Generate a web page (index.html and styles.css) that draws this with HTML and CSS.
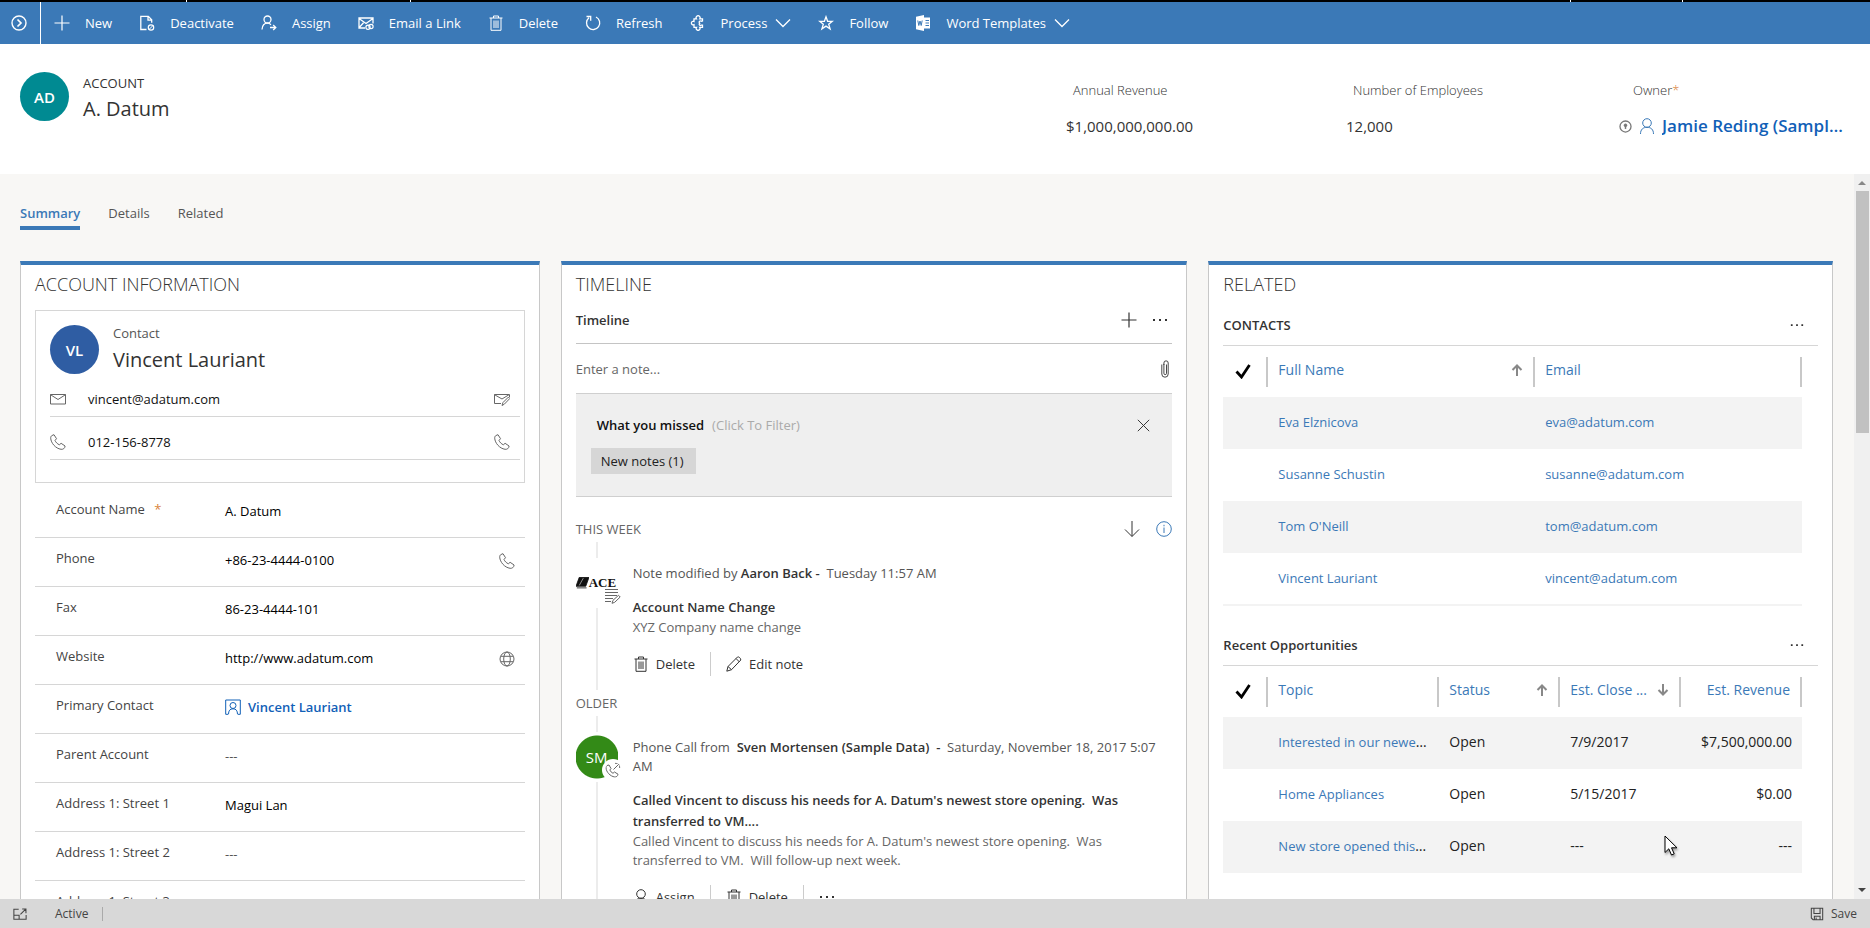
FILE: index.html
```html
<!DOCTYPE html>
<html lang="en">
<head>
<meta charset="utf-8">
<title>Account: A. Datum</title>
<link rel="stylesheet" href="styles.css">
</head>
<body>
<svg class="defs" aria-hidden="true">
  <symbol id="i-open" viewBox="0 0 16 16"><circle cx="8" cy="8" r="7" stroke-width="1.400"/><path d="M6.500 4.500 10 8l-3.500 3.500" stroke-width="1.700"/></symbol>
  <symbol id="i-plus" viewBox="0 0 16 16"><path d="M8 .5v15M.5 8h15" stroke-width="1.200"/></symbol>
  <symbol id="i-deact" viewBox="0 0 16 16"><path d="M7.500 14.500H1.800V1.300h7.500l3.400 3.500v3M9 1.300v3.900h3.700" stroke-width="1.300"/><circle cx="12" cy="12.500" r="2.700" stroke-width="1.200"/><path d="m10 14.500 4-4"/></symbol>
  <symbol id="i-assign" viewBox="0 0 16 16"><circle cx="6.500" cy="4.500" r="3.500" stroke-width="1.300"/><path d="M1 14.500c.3-4 2-6.300 5.500-6.300 1.500 0 2.700.6 3.400 1.600M9 12.500h5.500M12.200 10l2.600 2.500-2.600 2.500" stroke-width="1.300"/></symbol>
  <symbol id="i-link" viewBox="0 0 16 16"><path d="M7 13H1V3h14v5.500M1 3.500 8 8.500l7-5M1 12.700l4.500-5" stroke-width="1.300"/><circle cx="10" cy="12.300" r="2.100" stroke-width="1.200"/><circle cx="13" cy="11.500" r="2.100" stroke-width="1.200"/></symbol>
  <symbol id="i-trash" viewBox="0 0 16 16"><path d="M1.500 3h13M5.500 3V1h5v2M3 3v12.300h10V3M6 5.500v7.500M8 5.500v7.500M10 5.500v7.500"/></symbol>
  <symbol id="i-refresh" viewBox="0 0 16 16"><path d="M4 2.800A6.600 6.600 0 1 0 11 2M1.500 1.500H5.700V5.800" stroke-width="1.300"/></symbol>
  <symbol id="i-process" viewBox="0 0 16 16"><path d="M12.500 6V3.800H9.800a2 2 0 1 0-3.400 0H4v2.700a1.800 1.800 0 1 0 0 3.200v2.700h2.500a1.900 1.900 0 1 0 3.200 0h2.800v-2.200h-1.300a1.200 1.200 0 0 1-1.500-2 1.200 1.200 0 0 1 1.500-2z" stroke-width="1.300"/></symbol>
  <symbol id="i-star" viewBox="0 0 16 16"><path d="m8 1.800 1.600 4.500h4.700L10.700 9.200l1.400 4.700L8 11.100l-4.100 2.800 1.400-4.700L1.700 6.300h4.700z" stroke-width="1.300"/></symbol>
  <symbol id="i-word" viewBox="0 0 16 16"><path d="M9 0v16l-8-1.700V1.700zM9 2.500h6v11H9z" fill="currentColor" stroke="none"/><path class="wd" d="m2.800 5.500 1 5 1.200-4.500 1.200 4.500 1-5M10.500 5.500H14M10.500 8H14M10.500 10.500H14"/></symbol>
  <symbol id="i-chev" viewBox="0 0 16 16"><path d="m1 4.500 7 7 7-7" stroke-width="1.300"/></symbol>
  <symbol id="i-user" viewBox="0 0 16 16"><circle cx="8" cy="5" r="4.300"/><path d="M1.500 16c0-4.500 2.500-6.700 6.500-6.700s6.500 2.200 6.500 6.700"/></symbol>
  <symbol id="i-lock" viewBox="0 0 16 16"><circle cx="8" cy="8" r="6.800" stroke-width="1.600"/><circle cx="8" cy="6.500" r="1.700" fill="currentColor"/><path d="M8 7v4" stroke-width="1.800"/></symbol>
  <symbol id="i-mail" viewBox="0 0 16 16"><path d="M.5 3.500h15v9.500H.5zM.5 3.700 8 8.500l7.500-4.800"/></symbol>
  <symbol id="i-mailedit" viewBox="0 0 16 16"><path d="M7 12.500H.5v-9h15v2.500M.5 3.700 8 8l7-4.300M8 14.500l1-3 5.500-5.500 1.300 1.500-5.500 5.700z"/></symbol>
  <symbol id="i-phone" viewBox="0 0 16 16"><path d="M2 1.500 4 .7l2.500 4L5 6.500c.8 1.800 2.300 3.300 4.300 4.300l1.800-1.500 4 2.700c-.3 2.500-2 3.500-4 3.300C5.500 14.500 1 9 .7 4.200.7 3 1 2 2 1.500z"/></symbol>
  <symbol id="i-call" viewBox="0 0 16 16"><path d="M2 3.500 4 3l2 3.500L4.800 8c.7 1.500 1.700 2.500 3.200 3.300l1.500-1.300 3.500 2.200c-.3 2-1.500 3-3.200 2.800C5 14.200 1.300 10 1 5.800 1 4.700 1.300 4 2 3.500zM8.500 7.500l6-6M10 1.300h4.700V6"/></symbol>
  <symbol id="i-globe" viewBox="0 0 16 16"><circle cx="8" cy="8" r="7"/><ellipse cx="8" cy="8" rx="3.300" ry="7"/><path d="M1.800 5.300h12.400M1.800 10.700h12.400"/></symbol>
  <symbol id="i-contact" viewBox="0 0 16 16"><path d="M3 15.300H.7V1h14.600v14.300H13"/><circle cx="8" cy="6.500" r="3"/><path d="M3.500 15.300c0-3.700 1.500-5.500 4.500-5.500s4.500 1.800 4.500 5.500"/></symbol>
  <symbol id="i-dots" viewBox="0 0 16 16"><path d="M1 7h2v2H1zM7 7h2v2H7zM13 7h2v2h-2z" fill="currentColor" stroke="none"/></symbol>
  <symbol id="i-clip" viewBox="0 0 8 18"><path d="M5.500 4.500v8.800a1.300 1.300 0 0 1-2.600 0V4M2.900 5V3a2 2 0 0 1 4.300 0v11a3.200 3.200 0 0 1-6.400 0V4.500" stroke-width=".9"/></symbol>
  <symbol id="i-x" viewBox="0 0 16 16"><path d="m1 1 14 14m0-14L1 15" stroke-width="1.200"/></symbol>
  <symbol id="i-down" viewBox="0 0 16 16"><path d="M8 0v15.300M1 8.500l7 7 7-7"/></symbol>
  <symbol id="i-info" viewBox="0 0 16 16"><circle cx="8" cy="8" r="7.300"/><path d="M8 6.500V12M8 3.800v1.500"/></symbol>
  <symbol id="i-pencil" viewBox="0 0 16 16"><path d="m.8 15.200 1.200-4.700L11.500 1c1-.8 3.500 1.300 3.300 3L5.500 13.700zM2 10.500l3.500 3.200M10 2.500 13.500 6"/></symbol>
  <symbol id="i-note" viewBox="0 0 16 16"><path d="M0 1.500h13M0 4.500h13M0 7.500h12M0 10.500h8M0 13.500h6M7 15.300l1-3 5.500-5 1.700 1.700-5.500 5.300z"/></symbol>
  <symbol id="i-check" viewBox="0 0 16 16"><path d="M1.500 8.500 6.500 14 14.500 2" stroke-width="2.800"/></symbol>
  <symbol id="i-up" viewBox="0 0 12 12"><path d="M6 12V1.500M1.500 6 6 1.500 10.500 6" stroke-width="2"/></symbol>
  <symbol id="i-pop" viewBox="0 0 16 16"><path d="M6.500 2.500H1v11.500h14V9M1 9.500h6V14M8.500 8.500l6-6M10.500 2.300h4.300V7" stroke-width="1.200"/></symbol>
  <symbol id="i-save" viewBox="0 0 16 16"><path d="M1.500 1.500h13v13h-11l-2-2zM4.500 1.500v6h7v-6M5 14.500v-4h6.500v4M7 12v2.500" stroke-width="1.200"/></symbol>
</svg>

<div class="app">
  <div class="strip"><i></i><i></i><i></i><i></i></div>
  <nav class="toolbar" aria-label="Commands">
    <button class="expand" aria-label="Expand"><svg class="ic"><use href="#i-open"/></svg></button>
    <button><svg class="ic"><use href="#i-plus"/></svg>New</button>
    <button><svg class="ic"><use href="#i-deact"/></svg>Deactivate</button>
    <button><svg class="ic"><use href="#i-assign"/></svg>Assign</button>
    <button><svg class="ic"><use href="#i-link"/></svg>Email a Link</button>
    <button><svg class="ic"><use href="#i-trash"/></svg>Delete</button>
    <button><svg class="ic"><use href="#i-refresh"/></svg>Refresh</button>
    <button><svg class="ic"><use href="#i-process"/></svg>Process<svg class="ic chev"><use href="#i-chev"/></svg></button>
    <button><svg class="ic"><use href="#i-star"/></svg>Follow</button>
    <button><svg class="ic"><use href="#i-word"/></svg>Word Templates<svg class="ic chev"><use href="#i-chev"/></svg></button>
  </nav>

  <header class="record">
    <div class="avatar teal">AD</div>
    <div class="record-name"><p>ACCOUNT</p><h1>A. Datum</h1></div>
    <dl class="facts">
      <div><dt>Annual Revenue</dt><dd>$1,000,000,000.00</dd></div>
      <div><dt>Number of Employees</dt><dd>12,000</dd></div>
      <div class="owner"><dt>Owner<span class="req">*</span></dt><dd><svg class="ic lock"><use href="#i-lock"/></svg><svg class="ic blue"><use href="#i-user"/></svg><a href="#">Jamie Reding (Sample Data)</a></dd></div>
    </dl>
  </header>

  <div class="body">
    <main class="content">
      <nav class="tabs"><a href="#" class="on">Summary</a><a href="#">Details</a><a href="#">Related</a></nav>
      <div class="columns">
        <section class="card">
          <h2>ACCOUNT INFORMATION</h2>
          <div class="contact">
            <div class="contact-head"><div class="avatar navy">VL</div><div><p>Contact</p><h3>Vincent Lauriant</h3></div></div>
            <div class="line"><svg class="ic"><use href="#i-mail"/></svg><span>vincent@adatum.com</span><svg class="ic"><use href="#i-mailedit"/></svg></div>
            <div class="line"><svg class="ic"><use href="#i-phone"/></svg><span>012-156-8778</span><svg class="ic"><use href="#i-phone"/></svg></div>
          </div>
          <dl class="fields">
            <div><dt>Account Name <span class="req">*</span></dt><dd>A. Datum</dd></div>
            <div><dt>Phone</dt><dd>+86-23-4444-0100</dd><svg class="ic"><use href="#i-phone"/></svg></div>
            <div><dt>Fax</dt><dd>86-23-4444-101</dd></div>
            <div><dt>Website</dt><dd>http://www.adatum.com</dd><svg class="ic"><use href="#i-globe"/></svg></div>
            <div><dt>Primary Contact</dt><dd><a href="#"><svg class="ic"><use href="#i-contact"/></svg>Vincent Lauriant</a></dd></div>
            <div><dt>Parent Account</dt><dd class="none">---</dd></div>
            <div><dt>Address 1: Street 1</dt><dd>Magui Lan</dd></div>
            <div><dt>Address 1: Street 2</dt><dd class="none">---</dd></div>
            <div><dt>Address 1: Street 3</dt><dd class="none">---</dd></div>
          </dl>
        </section>

        <section class="card">
          <h2>TIMELINE</h2>
          <div class="tl-head"><h3>Timeline</h3><button aria-label="Add"><svg class="ic"><use href="#i-plus"/></svg></button><button aria-label="More"><svg class="ic"><use href="#i-dots"/></svg></button></div>
          <div class="note"><input type="text" placeholder="Enter a note..." aria-label="Enter a note"><button aria-label="Attach"><svg class="clip"><use href="#i-clip"/></svg></button></div>
          <div class="missed">
            <div class="missed-head"><b>What you missed</b><span>(Click To Filter)</span><button aria-label="Close"><svg class="ic"><use href="#i-x"/></svg></button></div>
            <button class="chip">New notes (1)</button>
          </div>
          <div class="group first"><h4>THIS WEEK</h4><button aria-label="Sort"><svg class="ic"><use href="#i-down"/></svg></button><button class="blue" aria-label="Info"><svg class="ic"><use href="#i-info"/></svg></button></div>
          <article class="entry">
            <div class="rail"><div class="face ace"><svg class="mark" viewBox="0 0 16 14"><path d="M4 0h12l-4 11H0zM1 13h12" fill="currentColor"/><path class="slit" d="m9 1-5 9"/></svg><span>ACE</span><svg class="ic badge"><use href="#i-note"/></svg></div></div>
            <div class="entry-body">
              <p class="who">Note modified by <b>Aaron Back -</b>&nbsp; Tuesday 11:57 AM</p>
              <p class="subject">Account Name Change</p>
              <p class="text">XYZ Company name change</p>
              <div class="actions"><button><svg class="ic"><use href="#i-trash"/></svg>Delete</button><button><svg class="ic"><use href="#i-pencil"/></svg>Edit note</button></div>
            </div>
          </article>
          <div class="group"><h4>OLDER</h4></div>
          <article class="entry">
            <div class="rail"><div class="face green">SM<svg class="ic badge round"><use href="#i-call"/></svg></div></div>
            <div class="entry-body">
              <p class="who">Phone Call from&nbsp; <b>Sven Mortensen (Sample Data)&nbsp; -</b>&nbsp; Saturday, November 18, 2017 5:07 AM</p>
              <p class="subject">Called Vincent to discuss his needs for A. Datum's newest store opening.&nbsp; Was transferred to VM....</p>
              <p class="text">Called Vincent to discuss his needs for A. Datum's newest store opening.&nbsp; Was transferred to VM.&nbsp; Will follow-up next week.</p>
              <div class="actions"><button><svg class="ic"><use href="#i-user"/></svg>Assign</button><button><svg class="ic"><use href="#i-trash"/></svg>Delete</button><button aria-label="More"><svg class="ic"><use href="#i-dots"/></svg></button></div>
            </div>
          </article>
        </section>

        <section class="card">
          <h2>RELATED</h2>
          <div class="sub first"><h3>CONTACTS</h3><button aria-label="More contacts commands"><svg class="ic"><use href="#i-dots"/></svg></button></div>
          <table class="contacts">
            <colgroup><col class="c-check"><col><col></colgroup>
            <thead><tr><th><svg class="ic"><use href="#i-check"/></svg></th><th><div>Full Name<svg class="sort"><use href="#i-up"/></svg></div></th><th><div>Email</div></th></tr></thead>
            <tbody>
              <tr><td></td><td><a href="#">Eva Elznicova</a></td><td><a href="#">eva@adatum.com</a></td></tr>
              <tr><td></td><td><a href="#">Susanne Schustin</a></td><td><a href="#">susanne@adatum.com</a></td></tr>
              <tr><td></td><td><a href="#">Tom O'Neill</a></td><td><a href="#">tom@adatum.com</a></td></tr>
              <tr><td></td><td><a href="#">Vincent Lauriant</a></td><td><a href="#">vincent@adatum.com</a></td></tr>
            </tbody>
          </table>
          <div class="sub"><h3>Recent Opportunities</h3><button aria-label="More opportunity commands"><svg class="ic"><use href="#i-dots"/></svg></button></div>
          <table class="opps">
            <colgroup><col class="c-check"><col class="c-topic"><col><col><col></colgroup>
            <thead><tr><th><svg class="ic"><use href="#i-check"/></svg></th><th><div>Topic</div></th><th><div>Status<svg class="sort"><use href="#i-up"/></svg></div></th><th><div><span>Est. Close ...</span><svg class="sort flip"><use href="#i-up"/></svg></div></th><th class="num"><div>Est. Revenue</div></th></tr></thead>
            <tbody>
              <tr><td></td><td><a href="#">Interested in our newest product</a></td><td>Open</td><td>7/9/2017</td><td class="num">$7,500,000.00</td></tr>
              <tr><td></td><td><a href="#">Home Appliances</a></td><td>Open</td><td>5/15/2017</td><td class="num">$0.00</td></tr>
              <tr><td></td><td><a href="#">New store opened this year</a></td><td>Open</td><td>---</td><td class="num">---</td></tr>
            </tbody>
          </table>
        </section>
      </div>
    </main>
    <div class="scroll"><i class="tri"></i><div class="thumb"></div><i class="tri dn"></i></div>
  </div>

  <footer class="status"><button aria-label="Pop out"><svg class="ic"><use href="#i-pop"/></svg></button><span>Active</span><button class="save"><svg class="ic"><use href="#i-save"/></svg>Save</button></footer>
</div>
<svg class="cursor" viewBox="0 0 14 22"><path d="M1 1v16.500l3.800-3.700 2.700 6.200 2.700-1.200-2.700-6H13z"/></svg>
</body>
</html>
```

FILE: styles.css
```css
* { box-sizing: border-box; margin: 0; padding: 0; }
body { font-family: "Open Sans", "Noto Sans", sans-serif; font-size: 13px; line-height: 20px; color: #333; overflow: hidden; }
button { font: inherit; color: inherit; background: none; border: 0; display: inline-flex; align-items: center; }
a { color: #3b79b7; text-decoration: none; }
svg { fill: none; stroke: currentColor; flex: none; }
.defs { display: none; }
.ic { width: 16px; height: 16px; }
.wd { stroke: #3b79b7; }
.blue { color: #3b79b7; }
.req { color: #d9843b; }
h1, h2, h3, h4, b { font-weight: 600; }

.app { height: 100vh; display: flex; flex-direction: column; }
.strip { height: 2px; background: #000; display: grid; grid-template-columns: 10% 12% 62% 6%; }
.strip i { border-right: 1px solid #fff; }
.toolbar { height: 42px; background: #3b79b7; color: #fff; display: flex; align-items: stretch; font-weight: 500; }
.toolbar button { gap: 15px; padding: 0 14px 0 13px; }
.toolbar .expand { width: 41px; padding: 0 11px; border-right: 1px solid #fff; }
.toolbar .chev { margin-left: -7px; }

.record { height: 130px; background: #fff; display: flex; padding: 28px 0 0 20px; }
.avatar { width: 49px; height: 49px; border-radius: 50%; color: #fff; font-size: 15px; font-weight: 600; display: grid; place-items: center; flex: none; }
.teal { background: #008a92; }
.navy { background: #2f5da3; }
.record-name { margin-left: 14px; flex: 1; }
.record-name h1 { font-size: 20px; line-height: 30px; font-weight: 400; }
.record-name p { line-height: 22px; }
.facts { display: grid; grid-template-columns: 280px 280px 244px; }
.facts dt { padding-left: 7px; line-height: 36px; font-weight: 300; }
.facts dd { font-size: 15px; line-height: 36px; }
.owner dd { margin-left: -7px; display: flex; align-items: center; gap: 7px; padding-right: 24px; }
.owner a { color: #1160b7; font-weight: 600; font-size: 17px; overflow: hidden; white-space: nowrap; text-overflow: ellipsis; }
.lock { width: 13px; height: 13px; color: #777; }

.body { flex: 1; min-height: 0; display: flex; background: #f8f7f5; }
.content { flex: 1; min-width: 0; overflow: hidden; padding: 28px 21px 0 20px; }
.tabs { display: flex; gap: 28px; }
.tabs a { line-height: 22px; padding-bottom: 2px; border-bottom: 4px solid transparent; color: #555; }
.tabs .on { color: #3b79b7; font-weight: 600; border-color: #3b79b7; }
.columns { margin-top: 31px; display: grid; grid-template-columns: 520fr 627fr 625fr; gap: 21px; }
.card { min-width: 0; background: #fff; border: 1px solid #c8c8c8; border-top: 4px solid #3b79b7; padding: 6px 14px 40px; }
.card h2 { font-size: 18px; line-height: 26px; font-weight: 300; }

.contact { border: 1px solid #d6d6d6; margin-top: 13px; padding: 14px 4px 22px 14px; }
.contact-head { display: flex; gap: 14px; }
.contact-head p { line-height: 16px; color: #555; }
.contact-head h3 { font-size: 20px; line-height: 38px; font-weight: 400; }
.line { height: 43px; border-bottom: 1px solid #d6d6d6; display: flex; align-items: center; padding: 8px 10px 0 0; color: #666; }
.line:nth-child(2) { height: 38px; padding-top: 2px; }
.line span { flex: 1; margin-left: 22px; color: #111; font-weight: 500; }

.fields > div { height: 49px; border-bottom: 1px solid #d6d6d6; display: flex; padding: 11px 10px 0 21px; color: #666; }
.fields > div:first-child { height: 55px; padding-top: 17px; }
.fields dt { width: 169px; color: #444; line-height: 18px; }
.fields dt .req { margin-left: 6px; }
.fields dd { flex: 1; color: #000; line-height: 22px; font-weight: 500; }
.fields dd a { color: #1160b7; font-weight: 600; display: flex; align-items: center; gap: 7px; }
.fields dd.none { color: #555; }
.fields > div > .ic { margin-top: 4px; }

.tl-head { display: flex; align-items: center; gap: 15px; height: 47px; border-bottom: 1px solid #c4c4c4; padding-right: 4px; }
.tl-head h3 { flex: 1; font-size: 13px; }
.note { display: flex; height: 49px; align-items: center; }
.note input { flex: 1; border: 0; outline: 0; font: inherit; height: 40px; }
.note input::placeholder { color: #666; opacity: 1; }
.note button { padding-right: 3px; }
.clip { width: 8px; height: 18px; }
.missed { background: #efefef; border: solid #cfcfcf; border-width: 1px 0; height: 104px; padding: 21px 22px 0 15px; }
.missed-head { display: flex; gap: 8px; padding-left: 6px; }
.missed-head b { color: #111; }
.missed-head span { flex: 1; color: #aaa; }
.missed-head .ic { width: 13px; height: 13px; }
.chip { background: #d6d6d6; height: 26px; padding: 0 12px 0 10px; margin-top: 13px; color: #222; }
.group { display: flex; height: 26px; align-items: center; gap: 16px; }
.group.first { margin-top: 19px; }
.group h4 { flex: 1; font-weight: 400; color: #666; }
.entry { display: grid; grid-template-columns: 42px 1fr; gap: 15px; }
.rail { background: linear-gradient(#ececec, #ececec) 20px 0 / 2px 100% no-repeat; padding-top: 16px; }
.face { position: relative; width: 42px; height: 50px; background: #fff; display: grid; place-items: center; color: #fff; font-size: 15px; }
.green { background: radial-gradient(circle, #338a17 21px, #fff 22px); }
.ace { font: bold 13px/16px "Liberation Serif", serif; color: #111; display: flex; align-items: center; }
.mark { width: 13px; height: 12px; }
.slit { stroke: #aaa; }
.badge { position: absolute; right: -3px; bottom: 4px; color: #666; }
.round { background: #fff; border-radius: 50%; box-shadow: 0 0 0 3px #fff; }
.entry-body { padding-top: 22px; }
.who { line-height: 19px; color: #555; }
.who b { color: #333; }
.subject { margin-top: 14px; font-weight: 600; line-height: 21px; }
.text { color: #666; line-height: 19px; }
.actions { display: flex; height: 24px; margin: 15px 0 14px; }
.actions button { gap: 7px; padding: 0 15px; border-right: 1px solid #ccc; }
.actions button:first-child { padding-left: 0; }
.actions button:last-child { border: 0; }

.sub { display: flex; align-items: center; justify-content: space-between; height: 42px; margin-top: 18px; border-bottom: 1px solid #d6d6d6; padding-right: 14px; }
.sub.first { margin-top: 7px; }
.sub h3 { font-size: 13px; }
.sub .ic { width: 14px; height: 14px; }
table { border-collapse: collapse; table-layout: fixed; width: calc(100% - 16px); font-size: 14px; }
.c-check { width: 45px; }
.c-topic { width: 171px; }
th { height: 51px; font-weight: 400; color: #3b79b7; text-align: left; }
th:first-child { color: #000; padding: 0 0 2px 12px; }
th .ic { display: block; }
th div { height: 30px; padding: 0 10px 4px; border-right: 2px solid #c8c8c8; display: flex; align-items: center; justify-content: space-between; gap: 4px; white-space: nowrap; }
th:nth-child(2) div { border-left: 2px solid #c8c8c8; margin-left: -2px; }
th span { overflow: hidden; text-overflow: ellipsis; }
th.num div { justify-content: flex-end; }
.sort { width: 12px; height: 12px; color: #888; }
.flip { transform: rotate(180deg); }
td { height: 52px; padding: 0 10px 2px; overflow: hidden; white-space: nowrap; text-overflow: ellipsis; color: #222; }
.num { text-align: right; }
td a { font-size: 13px; }
tbody tr:nth-child(odd) { background: #f3f3f3; }
.contacts { border-bottom: 2px solid #f3f3f3; }

.scroll { width: 16px; background: #f0f0f0; display: flex; flex-direction: column; align-items: center; padding: 7px 0; }
.thumb { width: 13px; height: 242px; background: #c1c1c1; margin: 6px 0 auto; }
.tri { border: 4px solid transparent; border-bottom-color: #888; border-top: 0; }
.dn { border-top: 4px solid #444; border-bottom: 0; }
.status { height: 29px; background: #d8d8d8; display: flex; align-items: center; padding: 0 13px; font-size: 12px; color: #444; }
.status .ic { width: 14px; height: 14px; }
.status span { margin-left: 28px; padding-right: 14px; line-height: 14px; border-right: 1px solid #aaa; flex: none; }
.save { margin-left: auto; gap: 7px; }
.cursor { position: absolute; left: 89%; top: 90%; width: 14px; height: 22px; fill: #fff; stroke: #000; filter: drop-shadow(1px 2px 1px #999); }
```
